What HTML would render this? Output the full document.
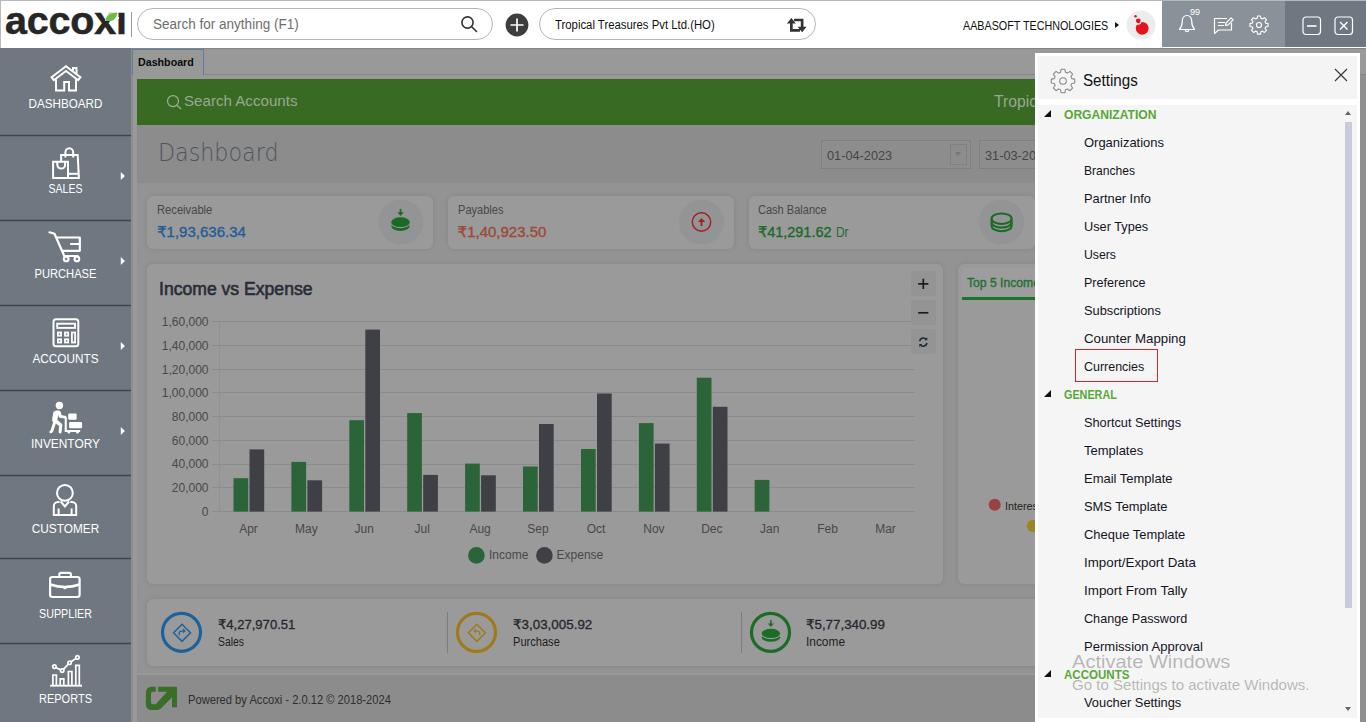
<!DOCTYPE html>
<html lang="en">
<head>
<meta charset="utf-8">
<title>Accoxi - Settings</title>
<style>
*{box-sizing:border-box;margin:0;padding:0}
html,body{width:1366px;height:722px;overflow:hidden;background:#fff;font-family:"Liberation Sans","DejaVu Sans",sans-serif;color:#222}
.abs{position:absolute}
.t{position:absolute;white-space:nowrap;transform-origin:0 0}
#app{position:relative;width:1366px;height:722px;overflow:hidden;background:#fff}
/* ---------- top bar ---------- */
#topbar{position:absolute;left:0;top:0;width:1366px;height:48px;background:#fff;box-shadow:inset 1px 1px 0 #b9b9b9}
#logo{position:absolute;left:4px;top:1px;font-weight:bold;font-size:39.5px;letter-spacing:-0.2px;-webkit-text-stroke:0.5px #262626;color:#262626;line-height:40px;transform-origin:0 0}
.pill{position:absolute;top:9px;height:32px;border:1px solid #b5b5b5;border-radius:16px;background:#fff}
#tb-grey{position:absolute;left:1162px;top:1px;width:123px;height:46px;background:#899199}
#tb-dark{position:absolute;left:1285px;top:1px;width:81px;height:46px;background:#6f7881}
/* ---------- sidebar ---------- */
#sidebar{position:absolute;left:0;top:48px;width:131px;height:674px;background:#6f7881}
.sl{position:absolute;left:0;width:131px;text-align:center;font-size:12.5px;color:#fff;line-height:16px;white-space:nowrap;transform-origin:50% 0}
/* ---------- content ---------- */
#content{position:absolute;left:0;top:0;width:1366px;height:722px;background:#999;overflow:hidden}
.card{position:absolute;background:#9a9a9a;border-radius:6px;box-shadow:0 0 5px rgba(0,0,0,.10)}
.lab{font-size:12.3px;color:#484848;line-height:16px}
.val{font-size:15px;line-height:20px;-webkit-text-stroke:0.35px currentColor}
.amt{font-size:13.4px;color:#26262e;line-height:18px;-webkit-text-stroke:0.3px currentColor}
.sub{font-size:12.3px;color:#1e1e1e;line-height:16px}
.zb{position:absolute;left:911px;width:25px;height:25px;background:#949494;border-radius:3px}
/* ---------- settings panel ---------- */
#panel{position:absolute;left:1035px;top:53px;width:325px;height:669px;background:#fff}
#phead{position:absolute;left:3px;top:3px;width:319px;height:43px;background:#f4f4f4}
#plist{position:absolute;left:3px;top:52px;width:319px;height:613px;background:#f5f5f5;overflow:hidden}
.th{left:26px;font-size:13px;font-weight:bold;color:#57a836;line-height:16px}
.ti{left:46px;font-size:12.6px;color:#14141e;line-height:16px}
.tri{position:absolute;left:6px;width:0;height:0;border-left:7.500px solid transparent;border-bottom:7.500px solid #111}
</style>
</head>
<body>
<div id="app">

<!-- CONTENT (dimmed) -->
<div id="content">
<div class="abs" style="left:131px;top:48px;width:2px;height:674px;background:#8e8e8e"></div>
<div class="abs" style="left:131px;top:47px;width:1235px;height:2px;background:linear-gradient(#6a6a6a,#8e8e8e)"></div>
<div class="abs" style="left:204px;top:74px;width:1162px;height:1px;background:#888"></div>
<div class="abs" style="left:132px;top:49px;width:72px;height:26px;background:#979997;border:1px solid #5e7d9c;border-bottom:0"></div>
<span class="t" style="transform:scaleX(0.9710);left:138.400px;top:54.500px;font-size:11px;font-weight:bold;color:#0a0a0a;line-height:14px">Dashboard</span>
<div class="abs" style="left:1350px;top:56px;width:2px;height:2px;background:#333;box-shadow:0 4px 0 #333,0 8px 0 #333"></div>
<div id="page" class="abs" style="left:137px;top:79px;width:1229px;height:643px;background:#939393"></div>
<div class="abs" style="left:137px;top:79px;width:1229px;height:46px;background:#386a24"></div>
<svg class="abs" style="left:165px;top:93px" width="18" height="18" viewBox="0 0 18 18" fill="none" stroke="#9db094" stroke-width="1.200"><circle cx="8" cy="8.100" r="5.500"/><path d="M12 12.200L16 16"/></svg>
<span class="t" style="transform:scaleX(0.9757);left:184.300px;top:92px;font-size:15.5px;color:#98a892;line-height:18px">Search Accounts</span>
<span class="t" style="transform:scaleX(0.9804);left:993.500px;top:92.700px;font-size:16px;color:#98a892;line-height:18px">Tropic</span>
<div class="abs" style="left:137px;top:125px;width:1229px;height:58px;background:#8c8c8c"></div>
<span class="t" style="transform:scaleX(0.8709);left:158.300px;top:134.900px;font-size:25.5px;font-family:'DejaVu Sans Light','DejaVu Sans','Liberation Sans',sans-serif;font-weight:200;color:#4e545e;line-height:34px">Dashboard</span>
<div class="abs" style="left:821px;top:140px;width:150px;height:29px;border:1px solid #7f7f7f;background:#8d8d8d"></div>
<span class="t" style="transform:scaleX(1.0195);left:827.300px;top:147.800px;font-size:12.5px;color:#454545;line-height:16px">01-04-2023</span>
<div class="abs" style="left:950px;top:144px;width:17px;height:21px;border:1px solid #808080"></div>
<div class="abs" style="left:955px;top:152px;width:0;height:0;border-left:3.500px solid transparent;border-right:3.500px solid transparent;border-top:4px solid #767676"></div>
<div class="abs" style="left:979px;top:140px;width:150px;height:29px;border:1px solid #7f7f7f;background:#8d8d8d"></div>
<span class="t" style="transform:scaleX(1.0195);left:985.200px;top:147.800px;font-size:12.5px;color:#454545;line-height:16px">31-03-2024</span>

<!-- KPI cards -->
<div class="card" style="left:147px;top:196px;width:286px;height:53px"></div>
<div class="card" style="left:448px;top:196px;width:286px;height:53px"></div>
<div class="card" style="left:749px;top:196px;width:286px;height:53px"></div>
<div class="card" style="left:1050px;top:196px;width:286px;height:53px"></div>
<span class="t lab" style="transform:scaleX(0.9089);left:156.900px;top:201.800px">Receivable</span>
<span class="t val" style="transform:scaleX(1.0012);left:157px;top:221.500px;color:#1f5d94">&#8377;1,93,636.34</span>
<span class="t lab" style="transform:scaleX(0.8993);left:457.500px;top:201.800px">Payables</span>
<span class="t val" style="transform:scaleX(1.0000);left:457.600px;top:221.500px;color:#9c4936">&#8377;1,40,923.50</span>
<span class="t lab" style="transform:scaleX(0.8973);left:758px;top:201.800px">Cash Balance</span>
<span class="t val" style="transform:scaleX(0.9635);left:758.100px;top:221.500px;color:#1a692a">&#8377;41,291.62</span>
<span class="t" style="transform:scaleX(0.7961);left:835.600px;top:221.500px;font-size:15px;line-height:20px;color:#24692f">Dr</span>
<svg class="abs" style="left:377.500px;top:199px" width="46" height="46" viewBox="0 0 46 46"><circle cx="22.900" cy="23" r="22.500" fill="#929496"/><g fill="#1b6926"><ellipse cx="22.500" cy="27.100" rx="9.200" ry="4.900"/><ellipse cx="22.500" cy="24.400" rx="9.600" ry="4.900" fill="#929496"/><ellipse cx="22.500" cy="23.200" rx="9.200" ry="4.900"/><path d="M21.700 10h1.700v3.200h2.300l-3.150 3.800-3.150-3.800h2.300z"/></g></svg>
<svg class="abs" style="left:679px;top:199px" width="46" height="46" viewBox="0 0 46 46"><circle cx="22.500" cy="23" r="22.500" fill="#929496"/><circle cx="22.500" cy="23" r="9.200" fill="none" stroke="#a31f18" stroke-width="1.400"/><path d="M21.600 27V23h-2.700l3.600-4 3.600 4h-2.700v4z" fill="#a31f18"/></svg>
<svg class="abs" style="left:979px;top:199px" width="46" height="46" viewBox="0 0 46 46"><circle cx="22.500" cy="23" r="22.500" fill="#929496"/><g fill="none" stroke="#1b6926" stroke-width="2"><ellipse cx="22.600" cy="19.700" rx="10" ry="5.300"/><path d="M12.600 19.700v7.200a10 5.300 0 0 0 20 0v-7.200"/><path d="M12.600 23.300a10 5.300 0 0 0 20 0"/></g></svg>

<!-- chart card -->
<div class="card" style="left:147px;top:264px;width:796px;height:320px"></div>
<span class="t" style="transform:scaleX(1.0051);left:158.800px;top:277.700px;font-size:17.5px;color:#2a2c36;line-height:22px;-webkit-text-stroke:0.6px currentColor">Income vs Expense</span>
<svg class="abs" style="left:147px;top:264px" width="796" height="320" viewBox="147 264 796 320" font-family="Liberation Sans, Arial, sans-serif" font-size="12" fill="#484848">
<g stroke="#8b8b8b" stroke-width="1">
<path d="M212 321.5H914.5"/>
<path d="M212 345.5H914.5"/>
<path d="M212 369.5H914.5"/>
<path d="M212 392.5H914.5"/>
<path d="M212 416.5H914.5"/>
<path d="M212 440.5H914.5"/>
<path d="M212 464.5H914.5"/>
<path d="M212 487.5H914.5"/>
<path d="M212 511.5H914.5"/>
<path d="M219.500 322V512" stroke="#919191"/>
</g>
<text x="208.500" y="326.0" text-anchor="end">1,60,000</text>
<text x="208.500" y="349.7" text-anchor="end">1,40,000</text>
<text x="208.500" y="373.5" text-anchor="end">1,20,000</text>
<text x="208.500" y="397.2" text-anchor="end">1,00,000</text>
<text x="208.500" y="421.0" text-anchor="end">80,000</text>
<text x="208.500" y="444.7" text-anchor="end">60,000</text>
<text x="208.500" y="468.4" text-anchor="end">40,000</text>
<text x="208.500" y="492.2" text-anchor="end">20,000</text>
<text x="208.500" y="515.9" text-anchor="end">0</text>
<text x="248.5" y="532.800" text-anchor="middle">Apr</text>
<rect x="233.5" y="478.2" width="14.700" height="33.4" fill="#2c6439"/>
<rect x="249.5" y="449.4" width="14.700" height="62.2" fill="#3f4045"/>
<text x="306.4" y="532.800" text-anchor="middle">May</text>
<rect x="291.4" y="461.9" width="14.700" height="49.7" fill="#2c6439"/>
<rect x="307.4" y="480.3" width="14.700" height="31.3" fill="#3f4045"/>
<text x="364.3" y="532.800" text-anchor="middle">Jun</text>
<rect x="349.3" y="420.2" width="14.700" height="91.4" fill="#2c6439"/>
<rect x="365.3" y="329.6" width="14.700" height="182.0" fill="#3f4045"/>
<text x="422.2" y="532.800" text-anchor="middle">Jul</text>
<rect x="407.2" y="413.1" width="14.700" height="98.5" fill="#2c6439"/>
<rect x="423.2" y="474.9" width="14.700" height="36.7" fill="#3f4045"/>
<text x="480.1" y="532.800" text-anchor="middle">Aug</text>
<rect x="465.1" y="463.6" width="14.700" height="48.0" fill="#2c6439"/>
<rect x="481.1" y="475.3" width="14.700" height="36.3" fill="#3f4045"/>
<text x="538.0" y="532.800" text-anchor="middle">Sep</text>
<rect x="523.0" y="466.5" width="14.700" height="45.1" fill="#2c6439"/>
<rect x="539.0" y="424.0" width="14.700" height="87.6" fill="#3f4045"/>
<text x="596.0" y="532.800" text-anchor="middle">Oct</text>
<rect x="581.0" y="449.0" width="14.700" height="62.6" fill="#2c6439"/>
<rect x="597.0" y="393.5" width="14.700" height="118.1" fill="#3f4045"/>
<text x="653.9" y="532.800" text-anchor="middle">Nov</text>
<rect x="638.9" y="423.1" width="14.700" height="88.5" fill="#2c6439"/>
<rect x="654.9" y="443.6" width="14.700" height="68.0" fill="#3f4045"/>
<text x="711.8" y="532.800" text-anchor="middle">Dec</text>
<rect x="696.8" y="377.7" width="14.700" height="133.9" fill="#2c6439"/>
<rect x="712.8" y="406.8" width="14.700" height="104.8" fill="#3f4045"/>
<text x="769.7" y="532.800" text-anchor="middle">Jan</text>
<rect x="754.7" y="479.9" width="14.700" height="31.7" fill="#2c6439"/>
<text x="827.6" y="532.800" text-anchor="middle">Feb</text>
<text x="885.5" y="532.800" text-anchor="middle">Mar</text>
<circle cx="476.400" cy="555.400" r="8.300" fill="#2c6439"/><text x="489" y="559">Income</text>
<circle cx="544.400" cy="555.400" r="8.300" fill="#3f4045"/><text x="556.600" y="559">Expense</text>
</svg>

<div class="zb" style="top:271px"></div><div class="zb" style="top:300px"></div><div class="zb" style="top:329px"></div>
<svg class="abs" style="left:911px;top:271px" width="25" height="83" viewBox="0 0 25 83" fill="none" stroke="#1c1c1c" stroke-width="1.700"><path d="M7.200 12.900H17.400M12.300 7.800V18"/><path d="M7.200 41.800H17.400"/><g stroke="#1e2a38" stroke-width="1.600"><path d="M8.600 70.200a3.900 3.900 0 0 1 6.900-1.700"/><path d="M16 72a3.900 3.900 0 0 1-6.900 1.700"/><path d="M16.300 66.200v3h-3z" fill="#1e2a38" stroke="none"/><path d="M8.300 76v-3h3z" fill="#1e2a38" stroke="none"/></g></svg>

<!-- top 5 card -->
<div class="card" style="left:958px;top:264px;width:408px;height:320px"></div>
<div class="abs" style="left:962px;top:268px;width:120px;height:29px;background:#9d9d9d;border-radius:4px 4px 0 0"></div>
<div class="abs" style="left:962px;top:297px;width:120px;height:3px;background:#1b7528"></div>
<span class="t" style="transform:scaleX(1.0131);left:967.300px;top:275px;font-size:12px;color:#1f7032;line-height:16px;-webkit-text-stroke:0.35px currentColor">Top 5 Income Heads</span>
<svg class="abs" style="left:985px;top:495px" width="60" height="40" viewBox="985 495 60 40"><circle cx="994.700" cy="504.800" r="6" fill="#994143"/><circle cx="1032.800" cy="526.100" r="6" fill="#9c8424"/></svg>
<span class="t" style="transform:scaleX(0.9554);left:1004.500px;top:497.500px;font-size:11.3px;color:#1e1e1e;line-height:16px">Interest Received</span>

<!-- totals card -->
<div class="card" style="left:147px;top:599px;width:1189px;height:67px"></div>
<svg class="abs" style="left:155px;top:606px" width="660" height="54" viewBox="155 606 660 54" fill="none">
<circle cx="181.500" cy="632.300" r="19" stroke="#1c629a" stroke-width="3.200"/>
<path d="M182 624.200l8.500 8.600-8.500 8.600-8.500-8.600z" stroke="#1c629a" stroke-width="1.500"/><path d="M179.200 635.300v-2.200a2 2 0 0 1 2-2h2" stroke="#1c629a" stroke-width="1.300"/><path d="M183 628.600l2.800 2.500-2.800 2.500z" fill="#1c629a"/>
<path d="M447.500 612V653M741.500 612V653" stroke="#7d7d7d" stroke-width="1"/>
<circle cx="476.500" cy="632.400" r="19" stroke="#9f7a1a" stroke-width="3.200"/>
<path d="M476.900 624.200l8.500 8.600-8.500 8.600-8.500-8.600z" stroke="#9f7a1a" stroke-width="1.500"/><path d="M479.700 635.300v-2.200a2 2 0 0 0-2-2h-2" stroke="#9f7a1a" stroke-width="1.300"/><path d="M475.900 628.600l-2.800 2.500 2.800 2.500z" fill="#9f7a1a"/>
<circle cx="770.500" cy="632.400" r="19" stroke="#1b6c25" stroke-width="3.200"/>
<g fill="#1b6c25"><ellipse cx="770.900" cy="637.200" rx="9.200" ry="4.600"/><ellipse cx="770.900" cy="634.600" rx="9.600" ry="4.600" fill="#9a9a9a"/><ellipse cx="770.900" cy="633.400" rx="9.200" ry="4.600"/><path d="M770.100 620h1.500v3.400h2.300l-3.050 3.600-3.050-3.600h2.300z"/></g>
</svg>
<span class="t amt" style="transform:scaleX(0.9752);left:217.600px;top:615.700px">&#8377;4,27,970.51</span>
<span class="t sub" style="transform:scaleX(0.8418);left:217.600px;top:633.700px">Sales</span>
<span class="t amt" style="transform:scaleX(1.0004);left:512.700px;top:615.700px">&#8377;3,03,005.92</span>
<span class="t sub" style="transform:scaleX(0.9008);left:512.700px;top:633.700px">Purchase</span>
<span class="t amt" style="transform:scaleX(0.9954);left:806.400px;top:615.700px">&#8377;5,77,340.99</span>
<span class="t sub" style="transform:scaleX(0.9671);left:806.400px;top:633.700px">Income</span>

<!-- footer -->
<div class="abs" style="left:137px;top:673px;width:1229px;height:2px;background:#9a9a9a"></div>
<div class="abs" style="left:137px;top:675px;width:1229px;height:47px;background:#8c8c8c"></div>
<svg class="abs" style="left:145px;top:686px" width="34" height="26" viewBox="0 0 34 26"><path d="M13.160 0.830H31.970V21.330H27V11.200L15.500 22.700Q14.200 24 11.800 24H6.200A5.300 5.300 0 0 1 0.900 18.700V6.100A5.300 5.300 0 0 1 6.200 0.830H10.740V5.740H7.800A1.800 1.800 0 0 0 6 7.540V16.400A1.800 1.800 0 0 0 7.800 18.200H10.740L22.100 5.740H13.160Z" fill="#386e28"/></svg>
<span class="t" style="transform:scaleX(0.9294);left:188.400px;top:692px;font-size:12px;color:#2e2e2e;line-height:16px">Powered by Accoxi - 2.0.12 &#169; 2018-2024</span>
<div class="abs" style="left:1357px;top:75px;width:9px;height:647px;background:#8f8f8f"></div>
</div>

<!-- TOPBAR -->
<div id="topbar"><div id="tbi" class="abs" style="left:1px;top:-1px;width:1365px;height:48px">
  <div id="logo">accox<span style="position:relative">i<span style="position:absolute;left:-2px;top:4px;width:12px;height:8.700px;background:#fff"></span><svg style="position:absolute;left:-11.500px;top:13.500px" width="13" height="9.700" viewBox="0 0 16 12"><path d="M1 11.300C0.500 4.500 6 0.300 15.300 0.500 14.500 8.500 9 12.500 1 11.300z" fill="#6cbd45" stroke="#fff" stroke-width="1.6" paint-order="stroke"/></svg><span style="position:absolute;left:-0.500px;top:19.300px;width:3px;height:1.800px;background:#fff"></span></span></div>
  <div class="abs" style="left:130px;top:13px;width:1px;height:25px;background:#9a9a9a"></div>
  <div class="pill" style="left:136px;width:356px">
    <span class="t" style="transform:scaleX(0.9651);left:15px;top:6px;font-size:14px;color:#6e6e6e;line-height:18px">Search for anything (F1)</span>
    <svg class="abs" style="left:322px;top:6px" width="18" height="18" viewBox="0 0 18 18" fill="none" stroke="#333" stroke-width="1.6"><circle cx="7.5" cy="7.5" r="5.6"/><path d="M11.7 11.7 L16.5 16.5" stroke-linecap="round"/></svg>
  </div>
  <svg class="abs" style="left:503.500px;top:14px" width="24" height="24" viewBox="0 0 24 24"><circle cx="12" cy="12" r="11.400" fill="#3d3d3d"/><path d="M12 5.500v13M5.500 12h13" stroke="#fff" stroke-width="1.700"/></svg>
  <div class="pill" style="left:537.500px;width:277px">
    <span class="t" style="transform:scaleX(0.9075);left:15px;top:8px;font-size:12.5px;color:#111;line-height:16px">Tropical Treasures Pvt Ltd.(HO)</span>
    <svg class="abs" style="left:246.500px;top:7px" width="21.500" height="18.300" viewBox="0 0 20 17" fill="none" stroke="#333" stroke-width="2.500"><path d="M5 6.500V13.300H13"/><path d="M15 10.500V3.700H7.500"/><path d="M0.800 7L5 1.800 9.200 7zM10.800 10L15 15.200 19.200 10z" fill="#333" stroke="none"/></svg>
  </div>
  <span class="t" style="transform:scaleX(0.8954);left:961.500px;top:19px;font-size:12px;color:#111;line-height:16px">AABASOFT TECHNOLOGIES</span>
  <div class="abs" style="left:1114px;top:22.500px;width:0;height:0;border-left:4.500px solid #111;border-top:3.500px solid transparent;border-bottom:3.500px solid transparent"></div>
  <svg class="abs" style="left:1125px;top:11px" width="30" height="30" viewBox="0 0 30 30"><circle cx="15" cy="15" r="14.500" fill="#ececec"/><circle cx="16.200" cy="18.300" r="6.400" fill="#e3141b"/><circle cx="12" cy="11.200" r="3.500" fill="#ececec"/><circle cx="12.300" cy="10.800" r="2.400" fill="#e3141b"/><circle cx="9.500" cy="6.300" r="1.250" fill="#e3141b"/></svg>
  <div id="tb-grey" style="left:1161px;top:2px"></div>
  <div id="tb-dark" style="left:1284px;top:2px"></div>
  <svg class="abs" style="left:1177px;top:15px" width="18" height="22" viewBox="0 0 18 22" fill="none" stroke="#fff" stroke-width="1.200" stroke-linejoin="round"><path d="M9 1.500c-3 0-4.700 2.400-4.700 5.600 0 4.500-1.300 6.600-2.800 8.400h15c-1.500-1.800-2.800-3.900-2.800-8.400 0-3.200-1.700-5.600-4.700-5.600z"/><path d="M7.300 16a1.700 1.700 0 0 0 3.400 0"/></svg>
  <span class="abs" style="left:1189px;top:8px;font-size:9px;color:#fff;line-height:10px">99</span>
  <svg class="abs" style="left:1211px;top:16px" width="22" height="20" viewBox="0 0 22 20" fill="none" stroke="#fff" stroke-width="1.200" stroke-linejoin="round"><path d="M15 3.500H2.500v11.500v3.500l4-3.500H19.500V8"/><path d="M6 7.500h7M6 10.500h6" /><path d="M13.500 10.500l0.600-2.600 5-5 2 2-5 5z"/></svg>
  <svg class="abs" style="left:1247.500px;top:15.500px" width="20" height="20" viewBox="0 0 26 26" fill="none" stroke="#fff" stroke-width="1.500" stroke-linejoin="round"><circle cx="13" cy="13" r="3.300"/><path d="M11.100 1.300h3.800l.55 3 2 .83 2.500-1.730 2.700 2.700-1.730 2.500.83 2 3 .55v3.800l-3 .55-.83 2 1.730 2.500-2.700 2.700-2.500-1.730-2 .83-.55 3h-3.800l-.55-3-2-.83-2.500 1.730-2.700-2.700 1.730-2.500-.83-2-3-.55v-3.800l3-.55.83-2-1.730-2.500 2.700-2.700 2.500 1.730 2-.83z"/></svg>
  <svg class="abs" style="left:1300.500px;top:17px" width="20" height="20" viewBox="0 0 20 20" fill="none" stroke="#fff" stroke-width="1.200"><rect x="1" y="1" width="17.500" height="17.500" rx="3"/><path d="M5 10h9.500" stroke-width="1.600"/></svg>
  <svg class="abs" style="left:1332.500px;top:17px" width="20" height="20" viewBox="0 0 20 20" fill="none" stroke="#fff" stroke-width="1.200"><rect x="1" y="1" width="17.500" height="17.500" rx="3"/><path d="M6 6l7.500 7.500M13.500 6l-7.500 7.500" stroke-width="1.400"/></svg>
</div></div>

<!-- SIDEBAR -->
<div id="sidebar">
<svg class="abs" style="left:0;top:0" width="131" height="674" viewBox="0 48 131 674" fill="none" stroke="#fff" stroke-width="2" stroke-linejoin="miter">
  <!-- separators -->
  <g stroke="#3e454b" stroke-width="1.400"><path d="M0 135.500H131M0 220.500H131M0 305.500H131M0 390.500H131M0 475.500H131M0 558.500H131M0 643.500H131"/></g>
  <!-- home -->
  <path d="M51.600 77.200L66 66.300L80.400 77.200L78.200 80.200L66 71L53.800 80.200Z"/>
  <path d="M56 79.200V90.400H64.200V82H69V90.400H76V79.200"/>
  <path d="M73 71V68H76.500V74"/>
  <!-- sales bags -->
  <path d="M53.100 161.700H68V177.900H53.100Z"/>
  <path d="M57.300 162v2.700a3.900 3.900 0 0 0 7.800 0V162"/>
  <path d="M61.100 161V154.900H77.700L78.900 177.900H68.500"/>
  <path d="M68.500 173.800H78.500"/>
  <path d="M65.400 157.500V152.500a3.900 4.300 0 0 1 7.800 0V157.500"/>
  <!-- cart -->
  <g stroke-width="2.200" stroke-linecap="round" stroke-linejoin="round"><path d="M49.500 232.300L54.500 233.800L64.300 256H77.500"/><path d="M57 237.500H79.800V250.800H62.800"/><path d="M71 244H79.500"/><circle cx="66.200" cy="258.900" r="2.300"/><circle cx="76.900" cy="258.900" r="2.300"/></g>
  <!-- calculator -->
  <rect x="53.500" y="319.200" width="24.800" height="27" rx="2.500"/>
  <rect x="57.200" y="323.700" width="17.800" height="4.200" stroke-width="1.900"/>
  <g stroke-width="1.800"><rect x="57.900" y="332.500" width="3.200" height="3.200"/><rect x="65" y="332.500" width="3.200" height="3.200"/><rect x="57.900" y="339.300" width="3.200" height="3.200"/><rect x="65" y="339.300" width="3.200" height="3.200"/><rect x="71.900" y="332.500" width="3.200" height="10"/></g>
  <!-- inventory -->
  <g fill="#fff" stroke="none"><circle cx="59.400" cy="405.500" r="3.700"/>
  <path d="M55.500 410.500h3.300q1.600 0 2 1.700l.8 3 3.600.6q1.200.3 1 1.500t-1.500 1.100l-4.800-.7q-.9-.2-1.100-1l-.500-1.800-1 5.200 4.300 3.300q.8.600.7 1.600l-.7 7.300q-.2 1.300-1.600 1.200t-1.400-1.500l.5-6.100-3.300-2.300-2.600 7.600q-.4 1-1.400 1.700l-.3.200q-1.200.600-1.900-.300t.1-1.800l1-.9 2.400-7.900q-1.300-1.300-.9-3.200l1-6q.3-1.900 2.300-1.900z"/>
  <path d="M64.700 416.700h2.100v13.400h13.400v1.900h-1.200a1.500 1.500 0 0 1-3 0h-5.600a1.500 1.500 0 0 1-3 0h-2.700z"/>
  <rect x="68.200" y="413.400" width="8.400" height="6.400" rx="1.200"/><rect x="69.100" y="421.900" width="13" height="6.400" rx="1.200"/></g>
  <!-- customer -->
  <circle cx="64.900" cy="492.900" r="7.900"/>
  <path d="M59.500 501.900H58a4.200 4.200 0 0 0-4.200 4.200V514.900H76.200V506.100a4.200 4.200 0 0 0-4.200-4.200H70.300"/>
  <path d="M60.700 501.500L64.900 506.400L69.100 501.500" />
  <path d="M58.600 508.500V514.500M71.600 508.500V514.500"/>
  <!-- supplier -->
  <g stroke-width="2.200"><rect x="50.100" y="577" width="29.500" height="20" rx="2.200"/><path d="M59.300 576.500V574.500a1.600 1.600 0 0 1 1.600-1.600h8.400a1.600 1.600 0 0 1 1.600 1.600V576.500"/><path d="M50.100 584.500Q65 589.500 79.600 584.500" stroke-width="2.400"/><rect x="63.300" y="586.300" width="3.200" height="3" rx="1" fill="#fff" stroke="none"/></g>
  <!-- reports -->
  <g stroke-width="1.700"><path d="M50.200 685.700H82" stroke-width="1.900"/><path d="M52.900 685V675h3.500V685M60.200 685V678.800h3.600V685M68.400 685V671.500h3.500V685M75.800 685V665.400h3.500V685"/><path d="M55.800 667.600L60.800 670M63.500 669.400L68.300 664M71 661.800L76 658.400"/><circle cx="54.400" cy="666.600" r="1.700"/><circle cx="62.200" cy="670.600" r="1.700"/><circle cx="69.600" cy="662.800" r="1.700"/><circle cx="77.400" cy="657.400" r="1.700"/></g>
  <!-- arrows -->
  <g fill="#fff" stroke="none"><path d="M120.800 172V180L124.900 176ZM120.800 257V265L124.900 261ZM120.800 342V350L124.900 346ZM120.800 427V435L124.900 431Z"/></g>
</svg>
<span class="sl" style="transform:scaleX(0.9345);top:47.5px">DASHBOARD</span>
<span class="sl" style="transform:scaleX(0.8434);top:132.5px">SALES</span>
<span class="sl" style="transform:scaleX(0.8925);top:217.5px">PURCHASE</span>
<span class="sl" style="transform:scaleX(0.9408);top:302.5px">ACCOUNTS</span>
<span class="sl" style="transform:scaleX(0.9519);top:387.5px">INVENTORY</span>
<span class="sl" style="transform:scaleX(0.9451);top:472.5px">CUSTOMER</span>
<span class="sl" style="transform:scaleX(0.8570);top:557.5px">SUPPLIER</span>
<span class="sl" style="transform:scaleX(0.8804);top:642.5px">REPORTS</span>
</div>

<!-- SETTINGS PANEL -->
<div id="panel">
  <div id="phead">
<svg class="abs" style="left:12px;top:12px" width="26" height="26" viewBox="0 0 26 26" fill="none" stroke="#8a8a8a" stroke-width="1.100" stroke-linejoin="round"><circle cx="13" cy="13" r="3.300"/><path d="M11.100 1.300h3.800l.55 3 2 .83 2.500-1.730 2.700 2.700-1.730 2.500.83 2 3 .55v3.800l-3 .55-.83 2 1.730 2.500-2.700 2.700-2.500-1.730-2 .83-.55 3h-3.800l-.55-3-2-.83-2.500 1.730-2.700-2.700 1.730-2.500-.83-2-3-.55v-3.800l3-.55.83-2-1.730-2.500 2.700-2.700 2.500 1.730 2-.83z"/></svg>
<span class="t" style="transform:scaleX(0.9479);left:45px;top:14.500px;font-size:16px;line-height:20px;color:#111">Settings</span>
<svg class="abs" style="left:296px;top:12px" width="14" height="14" viewBox="0 0 14 14" stroke="#333" stroke-width="1.100"><path d="M1 1l12 12M13 1L1 13"/></svg>
</div>
  <div id="plist">
<div class="tri" style="top:5.0px"></div><span class="t th" style="transform:scaleX(0.9294);top:1.5px">ORGANIZATION</span>
<span class="t ti" style="transform:scaleX(1.0296);top:29.9px">Organizations</span>
<span class="t ti" style="transform:scaleX(0.9602);top:57.9px">Branches</span>
<span class="t ti" style="transform:scaleX(1.0180);top:85.9px">Partner Info</span>
<span class="t ti" style="transform:scaleX(1.0115);top:113.9px">User Types</span>
<span class="t ti" style="transform:scaleX(0.9729);top:141.9px">Users</span>
<span class="t ti" style="transform:scaleX(0.9966);top:169.9px">Preference</span>
<span class="t ti" style="transform:scaleX(1.0171);top:197.9px">Subscriptions</span>
<span class="t ti" style="transform:scaleX(1.0546);top:225.9px">Counter Mapping</span>
<span class="t ti" style="transform:scaleX(0.9887);top:253.9px">Currencies</span>
<div class="tri" style="top:285.0px"></div><span class="t th" style="transform:scaleX(0.8307);top:281.5px">GENERAL</span>
<span class="t ti" style="transform:scaleX(1.0114);top:309.9px">Shortcut Settings</span>
<span class="t ti" style="transform:scaleX(1.0312);top:337.9px">Templates</span>
<span class="t ti" style="transform:scaleX(1.0306);top:365.9px">Email Template</span>
<span class="t ti" style="transform:scaleX(1.0224);top:393.9px">SMS Template</span>
<span class="t ti" style="transform:scaleX(1.0284);top:421.9px">Cheque Template</span>
<span class="t ti" style="transform:scaleX(1.0586);top:449.9px">Import/Export Data</span>
<span class="t ti" style="transform:scaleX(1.0644);top:477.9px">Import From Tally</span>
<span class="t ti" style="transform:scaleX(1.0027);top:505.9px">Change Password</span>
<span class="t ti" style="transform:scaleX(1.0366);top:533.9px">Permission Approval</span>
<div class="tri" style="top:565.0px"></div><span class="t th" style="transform:scaleX(0.8877);top:561.5px">ACCOUNTS</span>
<span class="t ti" style="transform:scaleX(1.0219);top:589.9px">Voucher Settings</span>
<div class="abs" style="left:37px;top:244px;width:83px;height:33px;border:1px solid #e8202a"></div>
<span class="t" style="transform:scaleX(1.0842);left:34.300px;top:546px;font-size:18.5px;line-height:22px;color:rgba(105,105,105,.45)">Activate Windows</span>
<span class="t" style="transform:scaleX(1.0376);left:34.300px;top:570.500px;font-size:14.5px;line-height:18px;color:rgba(105,105,105,.45)">Go to Settings to activate Windows.</span>
<div class="abs" style="left:307px;top:6px;width:0;height:0;border-left:3.600px solid transparent;border-right:3.600px solid transparent;border-bottom:4px solid #666"></div>
<div class="abs" style="left:307px;top:602px;width:0;height:0;border-left:3.600px solid transparent;border-right:3.600px solid transparent;border-top:4px solid #666"></div>
<div class="abs" style="left:307px;top:17px;width:7px;height:486px;background:#cacbda"></div>
</div>
</div>

</div>
</body>
</html>
